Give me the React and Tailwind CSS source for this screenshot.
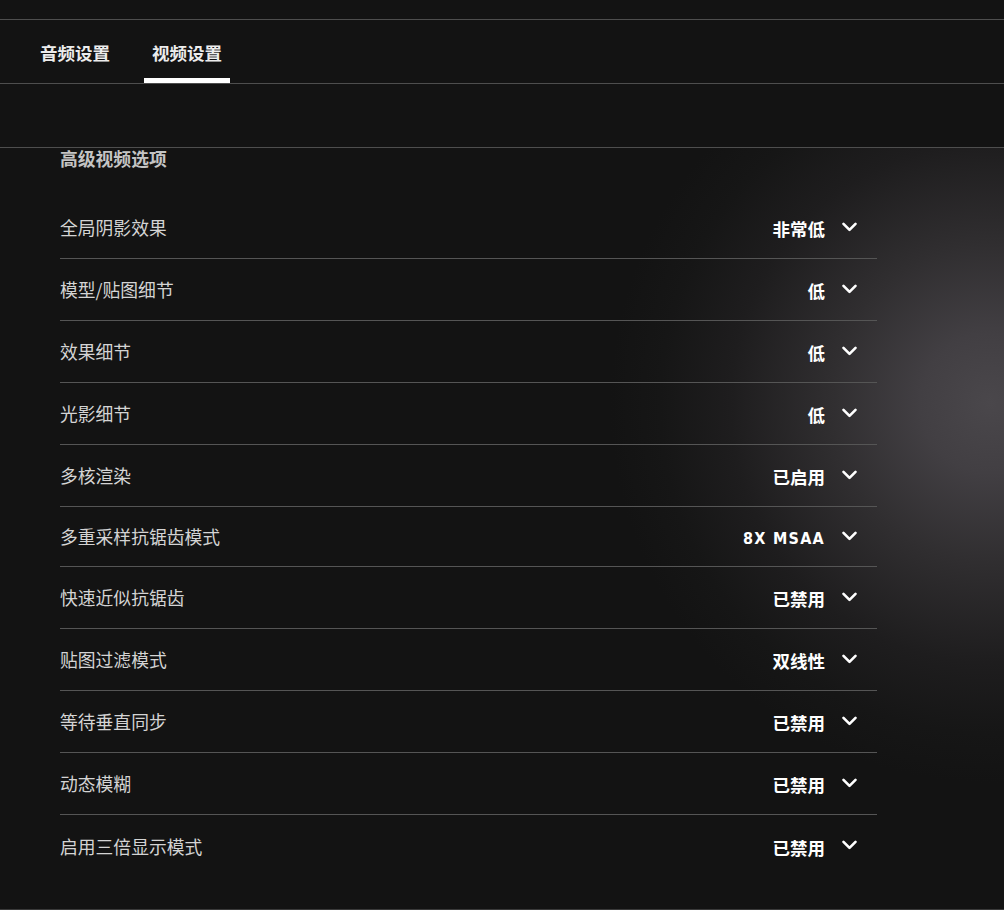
const rows = [
  { label: '全局阴影效果', value: '非常低' },
  { label: '模型/贴图细节', value: '低' },
  { label: '效果细节', value: '低' },
  { label: '光影细节', value: '低' },
  { label: '多核渲染', value: '已启用' },
  { label: '多重采样抗锯齿模式', value: '8X MSAA', latin: true, short: true },
  { label: '快速近似抗锯齿', value: '已禁用' },
  { label: '贴图过滤模式', value: '双线性' },
  { label: '等待垂直同步', value: '已禁用' },
  { label: '动态模糊', value: '已禁用' },
  { label: '启用三倍显示模式', value: '已禁用', last: true },
]

function Chevron() {
  return (
    <svg width="15" height="10" viewBox="0 0 15 10" fill="none" className="mb-[2px]">
      <path d="M1.5 1.8 L7.5 7.8 L13.5 1.8" stroke="white" strokeWidth="2.6" strokeLinecap="round" strokeLinejoin="round" />
    </svg>
  )
}

function Tab({ label, active }) {
  return (
    <div className="relative flex h-full items-center px-2 pt-[3px]">
      <span className="text-[17.5px] font-bold text-[#ececec]">{label}</span>
      {active && <div className="absolute bottom-0 left-0 right-0 h-[5px] bg-white" />}
    </div>
  )
}

function SettingRow({ label, value, latin, short, last }) {
  return (
    <div
      className={`flex items-center justify-between pr-5 ${short ? 'h-[60px]' : 'h-[62px]'} ${
        last ? '' : 'border-b border-[#555]'
      }`}
    >
      <span className="text-[17.8px] text-[#d4d4d4]">{label}</span>
      <div className="flex items-center gap-[17px]">
        <span
          className={`pt-1 font-bold text-white ${
            latin
              ? "text-[16px] tracking-[0.08em] font-['DejaVu_Sans_Condensed','Noto_Sans_CJK_SC',sans-serif]"
              : 'text-[17.5px]'
          }`}
        >
          {value}
        </span>
        <Chevron />
      </div>
    </div>
  )
}

export default function App() {
  return (
    <div className="min-h-[910px] bg-[#131313] font-['Noto_Sans_CJK_SC','Noto_Sans',sans-serif] text-white">
      <div className="h-[20px] border-b border-[#4e4e4e]" />
      <div className="flex h-[64px] gap-[26px] border-b border-[#4e4e4e] pl-8">
        <Tab label="音频设置" />
        <Tab label="视频设置" active />
      </div>
      <div className="h-[64px] border-b border-[#4e4e4e]" />

      <div className="bg-[radial-gradient(circle_at_990px_255px,#4a474b_0px,#423f43_70px,#302e30_160px,#1e1d1e_260px,#161616_330px,#131313_380px)] px-[60px] pb-[32px]">
        <div className="w-[817px]">
          <h2 className="text-[17.8px] font-bold leading-[20px] text-[#c4c4c4]">高级视频选项</h2>
          <div className="mt-[29px]">
            {rows.map((row) => (
              <SettingRow key={row.label} {...row} />
            ))}
          </div>
        </div>
      </div>
      <div className="border-b-2 border-[#3a3a3a]" />
    </div>
  )
}
